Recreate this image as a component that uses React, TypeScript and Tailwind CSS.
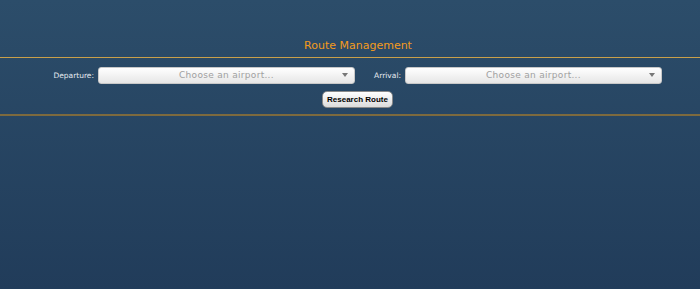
function AirportSelect() {
  return (
    <div className="relative flex h-[17px] w-[257px] items-center justify-center rounded-[3px] border border-[#c8c8c8] bg-gradient-to-b from-white to-[#e6e6e6] text-[9px] tracking-[0.3px] text-[#a0a0a0]">
      <span>Choose an airport...</span>
      <span className="absolute right-[6px] top-[5px] h-0 w-0 border-x-[3px] border-t-[4px] border-x-transparent border-t-[#777]" />
    </div>
  );
}

export default function App() {
  return (
    <div
      className="flex h-[289px] w-[700px] flex-col bg-gradient-to-b from-[#2c4d6a] to-[#213c5a]"
      style={{ fontFamily: '"DejaVu Sans", Verdana, sans-serif' }}
    >
      <div className="pl-[16px] pt-[38px] text-center text-[11px] leading-[16px] text-[#f39a1c]">Route Management</div>
      <div className="mt-[3px] h-px bg-[#c9a04a]" />
      <div className="mt-[9px] flex items-center">
        <span className="w-[94px] text-right text-[7.5px] text-[#e6eaf0]">Departure:</span>
        <div className="ml-[4px]">
          <AirportSelect />
        </div>
        <span className="w-[46px] text-right text-[7.5px] text-[#e6eaf0]">Arrival:</span>
        <div className="ml-[4px]">
          <AirportSelect />
        </div>
      </div>
      <div className="mt-[7px] flex justify-center pl-[15px]">
        <button
          className="h-[17px] rounded-[5px] border border-[#8a8a8a] bg-gradient-to-b from-white to-[#dcdcdc] px-[4px] text-[8px] font-bold leading-none text-black"
          style={{ fontFamily: '"Liberation Sans", Arial, sans-serif' }}
        >
          Research Route
        </button>
      </div>
      <div className="mt-[6px] h-[2px] bg-[#7d6a3e]" />
    </div>
  );
}
